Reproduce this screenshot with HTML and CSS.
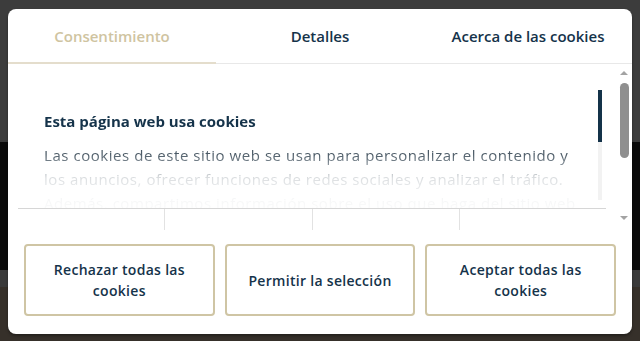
FILE: index.html
```html
<!DOCTYPE html>
<html lang="es">
<head>
<meta charset="utf-8">
<title>Cookies</title>
<link rel="stylesheet" href="styles.css">
</head>
<body>
<div class="overlay">
  <div class="dialog">
    <div class="tabs">
      <div class="tab active">Consentimiento</div>
      <div class="tab">Detalles</div>
      <div class="tab">Acerca de las cookies</div>
    </div>
    <div class="content">
      <div class="inner">
        <div class="scrollbox">
          <div class="text">
            <h2 class="title">Esta página web usa cookies</h2>
            <p class="body">Las cookies de este sitio web se usan para personalizar el contenido y los anuncios, ofrecer funciones de redes sociales y analizar el tráfico. Además, compartimos información sobre el uso que haga del sitio web</p>
          </div>
          <div class="track"><div class="thumb"></div></div>
        </div>
        <div class="cats">
          <div class="cat"></div>
          <div class="cat"></div>
          <div class="cat"></div>
          <div class="cat"></div>
        </div>
      </div>
      <div class="sb">
        <div class="arrow up"></div>
        <div class="sb-thumb"></div>
        <div class="sb-space"></div>
        <div class="arrow down"></div>
      </div>
    </div>
    <div class="footer">
      <button class="btn">Rechazar todas las cookies</button>
      <button class="btn">Permitir la selección</button>
      <button class="btn">Aceptar todas las cookies</button>
    </div>
  </div>
</div>
</body>
</html>
```
FILE: styles.css
```css
html, body {
  margin: 0;
  padding: 0;
}
body {
  width: 640px;
  height: 341px;
  overflow: hidden;
  font-family: "Open Sans", "Noto Sans", sans-serif;
  background: linear-gradient(to bottom,
    #3c3c3c 0, #3c3c3c 142px,
    #0b0b0b 142px, #0b0b0b 270px,
    #3a3a3a 270px, #3a3a3a 287px,
    #36302a 287px, #36302a 341px);
}
.overlay {
  padding: 9px 8px 0 8px;
}
.dialog {
  width: 624px;
  height: 325px;
  background: #fff;
  border-radius: 8px;
  overflow: hidden;
  box-shadow: 0 2px 3px rgba(0,0,0,0.35);
  display: flex;
  flex-direction: column;
}
.tabs {
  display: flex;
  height: 55px;
  box-sizing: border-box;
  border-bottom: 1px solid #e8e8e8;
}
.tab {
  flex: 1;
  display: flex;
  align-items: center;
  justify-content: center;
  font-size: 15px;
  font-weight: 600;
  color: #15334a;
  padding-top: 1px;
  box-sizing: border-box;
  border-bottom: 2px solid transparent;
  margin-bottom: -1px;
}
.tab.active {
  color: #cfc4a1;
  border-bottom-color: #e4ddcc;
}
.content {
  height: 166px;
  display: flex;
}
.inner {
  flex: 1;
  padding: 26px 12px 0 10px;
  overflow: hidden;
}
.scrollbox {
  display: flex;
  height: 118px;
}
.text {
  flex: 1;
  padding: 19px 0 0 26px;
  -webkit-mask-image: linear-gradient(to bottom, #000 0, #000 64px, rgba(0,0,0,0.2) 88px, rgba(0,0,0,0.06) 106px, rgba(0,0,0,0.03) 118px);
  mask-image: linear-gradient(to bottom, #000 0, #000 64px, rgba(0,0,0,0.2) 88px, rgba(0,0,0,0.06) 106px, rgba(0,0,0,0.03) 118px);
  overflow: hidden;
}
.title {
  margin: 0 0 10px 0;
  font-size: 15px;
  line-height: 24px;
  font-weight: 700;
  color: #15334a;
}
.body {
  margin: 0;
  font-size: 15px;
  line-height: 24px;
  letter-spacing: 0.55px;
  color: #4b5a66;
  width: 535px;
}
.track {
  width: 4px;
  margin: 0 4px 0 8px;
  height: 110px;
  background: #f2f2f2;
}
.thumb {
  height: 52px;
  background: #143249;
}
.cats {
  display: flex;
  border-top: 1px solid #d6d6d6;
  height: 24px;
}
.cat {
  flex: 1;
  border-left: 1px solid #e2e2e2;
}
.cat:first-child {
  border-left: none;
}
.sb {
  width: 14px;
  display: flex;
  flex-direction: column;
  align-items: center;
  padding: 6px 2px 9px 0;
  box-sizing: border-box;
}
.arrow {
  width: 0;
  height: 0;
  border-left: 4px solid transparent;
  border-right: 4px solid transparent;
  margin: 1px 0;
}
.arrow.up {
  border-bottom: 4px solid #a3a3a3;
}
.arrow.down {
  border-top: 4px solid #a3a3a3;
}
.sb-thumb {
  width: 9px;
  height: 75px;
  margin-top: 7px;
  border-radius: 5px;
  background: #8f8f8f;
}
.sb-space {
  flex: 1;
}
.footer {
  flex: 1;
  display: flex;
  gap: 10px;
  padding: 14px 16px 18px 16px;
}
.btn {
  flex: 1;
  border: 2px solid #cfc5a4;
  border-radius: 4px;
  background: #fff;
  font-family: "Open Sans", "Noto Sans", sans-serif;
  font-size: 14px;
  font-weight: 600;
  line-height: 21px;
  letter-spacing: 0.3px;
  color: #15334a;
  padding: 0 12px;
}
```
